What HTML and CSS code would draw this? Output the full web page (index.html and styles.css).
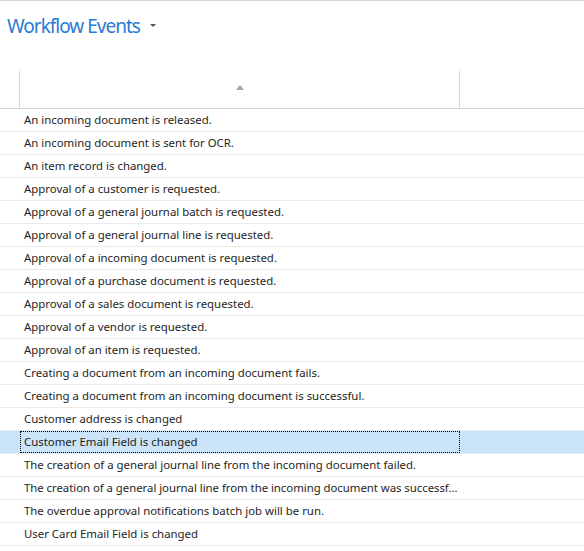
FILE: index.html
```html
<!DOCTYPE html>
<html>
<head>
<meta charset="utf-8">
<link rel="stylesheet" href="styles.css">
</head>
<body>
<div class="page">
  <div class="titlebar">
    <span class="title">Workflow Events</span>
    <span class="caret"></span>
  </div>
  <div class="grid">
    <div class="head">
      <div class="c0"></div>
      <div class="c1"><span class="sort"></span></div>
      <div class="c2"></div>
    </div>
    <div class="row"><div class="c0"></div><div class="c1">An incoming document is released.</div><div class="c2"></div></div>
    <div class="row"><div class="c0"></div><div class="c1">An incoming document is sent for OCR.</div><div class="c2"></div></div>
    <div class="row"><div class="c0"></div><div class="c1">An item record is changed.</div><div class="c2"></div></div>
    <div class="row"><div class="c0"></div><div class="c1">Approval of a customer is requested.</div><div class="c2"></div></div>
    <div class="row"><div class="c0"></div><div class="c1">Approval of a general journal batch is requested.</div><div class="c2"></div></div>
    <div class="row"><div class="c0"></div><div class="c1">Approval of a general journal line is requested.</div><div class="c2"></div></div>
    <div class="row"><div class="c0"></div><div class="c1">Approval of a incoming document is requested.</div><div class="c2"></div></div>
    <div class="row"><div class="c0"></div><div class="c1">Approval of a purchase document is requested.</div><div class="c2"></div></div>
    <div class="row"><div class="c0"></div><div class="c1">Approval of a sales document is requested.</div><div class="c2"></div></div>
    <div class="row"><div class="c0"></div><div class="c1">Approval of a vendor is requested.</div><div class="c2"></div></div>
    <div class="row"><div class="c0"></div><div class="c1">Approval of an item is requested.</div><div class="c2"></div></div>
    <div class="row"><div class="c0"></div><div class="c1">Creating a document from an incoming document fails.</div><div class="c2"></div></div>
    <div class="row"><div class="c0"></div><div class="c1">Creating a document from an incoming document is successful.</div><div class="c2"></div></div>
    <div class="row"><div class="c0"></div><div class="c1">Customer address is changed</div><div class="c2"></div></div>
    <div class="row selected"><div class="c0"></div><div class="c1 focus">Customer Email Field is changed</div><div class="c2"></div></div>
    <div class="row"><div class="c0"></div><div class="c1">The creation of a general journal line from the incoming document failed.</div><div class="c2"></div></div>
    <div class="row"><div class="c0"></div><div class="c1 trunc">The creation of a general journal line from the incoming document was successf…</div><div class="c2"></div></div>
    <div class="row"><div class="c0"></div><div class="c1">The overdue approval notifications batch job will be run.</div><div class="c2"></div></div>
    <div class="row"><div class="c0"></div><div class="c1">User Card Email Field is changed</div><div class="c2"></div></div>
  </div>
</div>
</body>
</html>
```
FILE: styles.css
```css
html, body {
  margin: 0;
  padding: 0;
  background: #ffffff;
}
.page {
  width: 584px;
  height: 551px;
  overflow: hidden;
  border-top: 1px solid #d6d6d6;
  box-sizing: border-box;
  font-family: "Noto Sans", "Open Sans", "DejaVu Sans", sans-serif;
}
.titlebar {
  display: flex;
  align-items: center;
  height: 50px;
  padding-left: 7px;
}
.title {
  font-size: 19px;
  letter-spacing: -1px;
  color: #2a7ad5;
}
.caret {
  width: 0;
  height: 0;
  margin-left: 10px;
  margin-top: -2px;
  border-left: 3px solid transparent;
  border-right: 3px solid transparent;
  border-top: 3px solid #555;
}
.grid {
  margin-top: 20px;
}
.head {
  display: flex;
  height: 37px;
  border-bottom: 1px solid #d6d6d6;
}
.head .c0 {
  border-right: 1px solid #d6d6d6;
}
.head .c1 {
  border-right: 1px solid #d6d6d6;
  display: flex;
  justify-content: center;
  padding-top: 14px;
  box-sizing: border-box;
}
.sort {
  width: 0;
  height: 0;
  border-left: 4px solid transparent;
  border-right: 4px solid transparent;
  border-bottom: 5px solid #a6a6a6;
}
.c0 {
  width: 20px;
  flex: none;
  box-sizing: border-box;
}
.c1 {
  width: 440px;
  flex: none;
  box-sizing: border-box;
}
.c2 {
  flex: 1;
}
.row {
  display: flex;
  height: 23px;
  border-bottom: 1px solid #ebebeb;
  box-sizing: border-box;
  font-size: 11.4px;
  color: #1e1e1e;
}
.row .c1 {
  padding-left: 3px;
  line-height: 19px;
  white-space: nowrap;
  overflow: hidden;
  border: 1px solid transparent;
  padding-right: 0;
}
.row .c1.trunc {
  letter-spacing: -0.04px;
}
.row.selected {
  background: #cce4f7;
}
.row .c1.focus {
  border: 1px dotted #000000;
}
```
